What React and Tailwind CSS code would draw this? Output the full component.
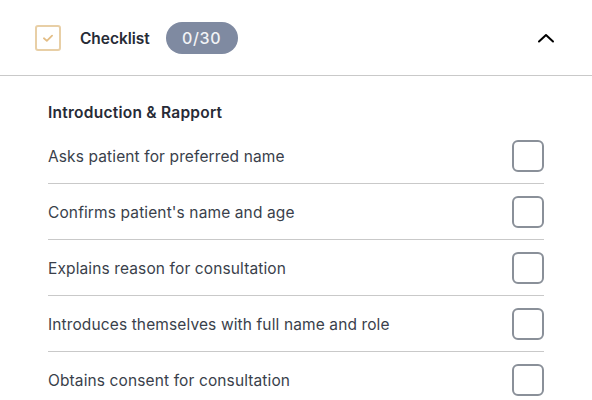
import React from "react";

const items = [
  "Asks patient for preferred name",
  "Confirms patient's name and age",
  "Explains reason for consultation",
  "Introduces themselves with full name and role",
  "Obtains consent for consultation",
];

export default function App() {
  return (
    <div className="w-[592px] h-[400px] overflow-hidden bg-white font-['Inter',sans-serif]">
      <header className="h-[76px] border-b border-[#c9c9c9] pl-[35px] pr-[36px] flex items-center">
        <div className="w-[26px] h-[26px] rounded-[3px] border-2 border-[#e8cfa6] flex items-center justify-center">
          <svg width="14" height="14" viewBox="0 0 12 12" fill="none" stroke="#e3bd85" strokeWidth="1.5" strokeLinecap="round" strokeLinejoin="round">
            <path d="M2.5 6.2 5 8.4 9.5 4" />
          </svg>
        </div>
        <span className="ml-[19px] pt-[2px] text-[15.5px] tracking-[-0.05px] font-semibold text-[#272b36]">Checklist</span>
        <span className="ml-[16px] w-[72px] h-[32px] rounded-full bg-[#7f8aa1] text-[#f2f3f6] text-[16px] tracking-[0.6px] font-medium flex items-center justify-center">0/30</span>
        <svg className="ml-auto" width="20" height="20" viewBox="0 0 20 20" fill="none" stroke="#000" strokeWidth="2" strokeLinecap="round" strokeLinejoin="round">
          <path d="M3 14 10 7.5 17 14" transform="translate(0 -0.5)" />
        </svg>
      </header>
      <main className="px-[48px] pt-[27px]">
        <h2 className="text-[15.5px] leading-[20px] tracking-[0.25px] font-semibold text-[#272b36] mb-[5px]">Introduction &amp; Rapport</h2>
        <ul>
          {items.map((t, i) => (
            <li key={t} className={`h-[56px] flex items-center justify-between border-b ${i < items.length - 1 ? "border-[#c9c9c9]" : "border-transparent"}`}>
              <span className="pt-[3px] text-[15.5px] tracking-[0.12px] text-[#3a3f4b]">{t}</span>
              <span className="w-[32px] h-[32px] rounded-[6px] border-2 border-[#8a9099] bg-white" />
            </li>
          ))}
        </ul>
      </main>
    </div>
  );
}
